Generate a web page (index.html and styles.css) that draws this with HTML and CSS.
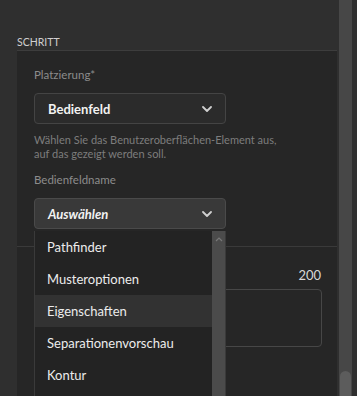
FILE: index.html
```html
<!DOCTYPE html>
<html lang="de">
<head>
    <meta charset="UTF-8">
    <meta name="viewport" content="width=device-width, initial-scale=1.0">
    <title>Schritt</title>
    <link rel="stylesheet" href="styles.css">
</head>
<body>
    <div class="page">
        <div class="main">
            <div class="section-title">SCHRITT</div>

            <div class="card">
                <!-- Platzierung -->
                <div class="block">
                    <div class="label">Platzierung*</div>
                    <div class="select">
                        <span class="select-value">Bedienfeld</span>
                        <svg class="chevron" width="10" height="6" viewBox="0 0 10 6"><path d="M1 1l4 4 4-4" fill="none" stroke="#d0d0d0" stroke-width="1.8" stroke-linecap="round" stroke-linejoin="round"/></svg>
                    </div>
                    <p class="hint">Wählen Sie das Benutzeroberflächen-Element aus, auf das gezeigt werden soll.</p>

                    <div class="label">Bedienfeldname</div>
                    <div class="picker">
                        <div class="select open">
                            <span class="select-value placeholder">Auswählen</span>
                            <svg class="chevron" width="10" height="6" viewBox="0 0 10 6"><path d="M1 1l4 4 4-4" fill="none" stroke="#d0d0d0" stroke-width="1.8" stroke-linecap="round" stroke-linejoin="round"/></svg>
                        </div>

                        <!-- Dropdown list -->
                        <div class="menu">
                            <ul class="menu-list">
                                <li>Pathfinder</li>
                                <li>Musteroptionen</li>
                                <li class="active">Eigenschaften</li>
                                <li>Separationenvorschau</li>
                                <li>Kontur</li>
                            </ul>
                            <div class="menu-scroll">
                                <svg width="8" height="5" viewBox="0 0 8 5"><path d="M1 4l3-3 3 3" fill="none" stroke="#777" stroke-width="1.2"/></svg>
                            </div>
                        </div>
                    </div>
                </div>

                <!-- Beschreibung (label is hidden behind the open list) -->
                <div class="block second">
                    <div class="field-head">
                        <span class="counter">200</span>
                    </div>
                    <div class="textarea"></div>
                </div>
            </div>
        </div>

        <div class="scrollbar">
            <div class="thumb"></div>
        </div>
    </div>
</body>
</html>
```

FILE: styles.css
```css
body {
    margin: 0;
    background-color: #2f2f2f;
    font-family: Lato, "Noto Sans", Arial, sans-serif;
    overflow: hidden;
}
.page {
    display: flex;
    height: 396px;
}
.main {
    width: 338px;
    padding-top: 36px;
}
.section-title {
    padding-left: 17px;
    font-size: 10.5px;
    color: #cfcfcf;
    height: 14px;
}
.card {
    margin-left: 17px;
    width: 320px;
    background-color: #262626;
    border-top: 1px solid #3d3d3d;
}
.block {
    padding: 15px 15px 0 17px;
}
.label {
    font-size: 11.5px;
    color: #8c8c8c;
    height: 27px;
    line-height: 18px;
}
.select {
    box-sizing: border-box;
    width: 192px;
    height: 31px;
    display: flex;
    align-items: center;
    justify-content: space-between;
    padding: 0 13px 0 13px;
    background-color: #2b2b2b;
    border: 1px solid #444;
    border-radius: 4px;
}
.select-value {
    font-size: 13px;
    font-weight: bold;
    color: #f2f2f2;
}
.select.open {
    background-color: #393939;
    border-color: #4a4a4a;
}
.placeholder {
    font-style: italic;
}
.hint {
    margin: 9px 0 10px;
    font-size: 11px;
    line-height: 14px;
    color: #7d7d7d;
    width: 260px;
}
.picker {
    position: relative;
    height: 32px;
}
.menu {
    position: absolute;
    top: 33px;
    left: 0;
    width: 192px;
    display: flex;
    background-color: #232323;
    border-left: 1px solid #3a3a3a;
    border-right: 1px solid #3a3a3a;
    box-sizing: border-box;
    z-index: 2;
}
.menu-list {
    list-style: none;
    margin: 0;
    padding: 0 0 8px;
    flex: 1;
}
.menu-list li {
    height: 32px;
    line-height: 32px;
    padding-left: 12px;
    font-size: 13px;
    color: #ececec;
}
.menu-list li.active {
    background-color: #323232;
}
.menu-scroll {
    width: 13px;
    background-color: #4b4b4b;
    display: flex;
    justify-content: center;
    padding-top: 6px;
    box-sizing: border-box;
}
.menu-scroll svg {
    display: block;
}
.second {
    margin-top: 16px;
    border-top: 1px solid #3a3a3a;
    padding-top: 18px;
    height: 200px;
}
.field-head {
    display: flex;
    justify-content: flex-end;
    height: 24px;
    padding-right: 1px;
}
.counter {
    font-size: 13px;
    color: #d8d8d8;
    line-height: 20px;
}
.textarea {
    width: 288px;
    height: 58px;
    box-sizing: border-box;
    border: 1px solid #474747;
    border-radius: 4px;
}
.scrollbar {
    width: 13px;
    margin-left: 1px;
    background-color: #474747;
    position: relative;
}
.thumb {
    position: absolute;
    left: 1px;
    right: 1px;
    bottom: 0;
    height: 25px;
    border-radius: 6px 6px 0 0;
    background-color: #5c5c5c;
}
```
